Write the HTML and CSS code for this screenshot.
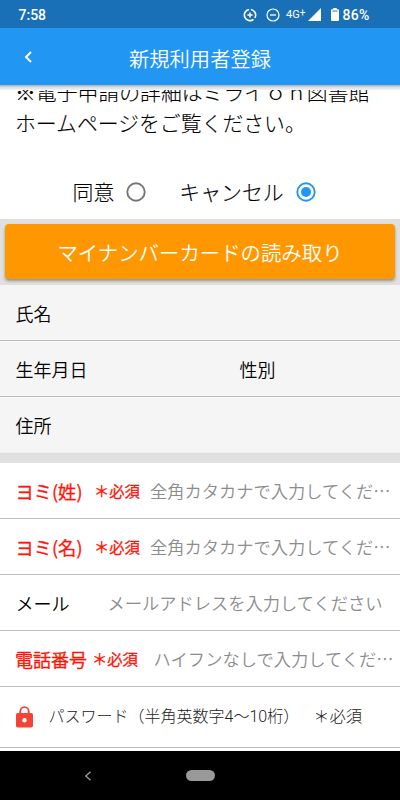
FILE: index.html
```
<!DOCTYPE html>
<html lang="ja">
<head>
<meta charset="utf-8">
<title>新規利用者登録</title>
<link rel="stylesheet" href="styles.css">
</head>
<body>
<div class="screen">
  <header class="status">
    <span class="clock">7:58</span>
    <svg class="saver" width="14" height="14" viewBox="0 0 14 14" fill="none" stroke="#fff"><path d="M7.900 1.500A5.600 5.600 0 0 1 11.900 9.800M10.600 11.300A5.600 5.600 0 1 1 6.100 1.500" stroke-width="1.600"/><path d="M7 4.400v5.200M4.400 7h5.200" stroke-width="1.500"/></svg>
    <svg class="dnd" width="14" height="14" viewBox="0 0 14 14" fill="none" stroke="#fff"><circle cx="7" cy="7" r="6" stroke-width="1.2"/><path d="M4 7h6" stroke-width="1.3"/></svg>
    <span class="net">4G<span class="plus">+</span></span>
    <svg class="signal" width="13" height="13" viewBox="0 0 13 13"><path d="M13 0v13H0z" fill="#fff"/></svg>
    <svg class="battery" width="8" height="13" viewBox="0 0 8 13"><path d="M2.3 0h3.4v1.3H7q1 0 1 1V12q0 1-1 1H1q-1 0-1-1V2.300q0-1 1-1h1.300z" fill="#fff"/><path d="M1.300 2.600h5.400v.9H1.300z" fill="#1a70b7"/></svg>
    <span class="percent">86%</span>
  </header>
  <div class="appbar">
    <svg class="back" width="8" height="12" viewBox="0 0 8 12"><path d="M7 1 2 6l5 5" fill="none" stroke="#fff" stroke-width="1.9"/></svg>
    <h1>新規利用者登録</h1>
  </div>
  <div class="edge"></div>
  <main>
    <section class="notice">
      <p>※電子申請の詳細はミライｏｎ図書館<br>ホームページをご覧ください。</p>
    </section>
    <div class="choices">
      <span>同意</span>
      <svg class="radio" width="20" height="20" viewBox="0 0 20 20"><circle cx="10" cy="10" r="8.700" fill="none" stroke="#757575" stroke-width="1.900"/></svg>
      <span class="cancel">キャンセル</span>
      <svg class="radio selected" width="20" height="20" viewBox="0 0 20 20"><circle cx="10" cy="10" r="8.700" fill="none" stroke="#2196f3" stroke-width="1.900"/><circle cx="10" cy="10" r="5" fill="#2196f3"/></svg>
    </div>
    <div class="action"><button>マイナンバーカードの読み取り</button></div>
    <div class="row info"><span class="label">氏名</span></div>
    <div class="row info split"><span class="label">生年月日</span><span class="label">性別</span></div>
    <div class="row info last"><span class="label">住所</span></div>
    <div class="band"></div>
    <div class="row"><span class="label red">ヨミ(姓)</span><span class="must yomi">＊必須</span><span class="hint">全角カタカナで入力してくだ…</span></div>
    <div class="row"><span class="label red">ヨミ(名)</span><span class="must yomi">＊必須</span><span class="hint">全角カタカナで入力してくだ…</span></div>
    <div class="row"><span class="label mail">メール</span><span class="hint">メールアドレスを入力してください</span></div>
    <div class="row"><span class="label red number">電話番号</span><span class="must tel">＊必須</span><span class="hint">ハイフンなしで入力してくだ…</span></div>
    <div class="row password">
      <svg class="lock" width="17" height="22" viewBox="0 0 17 22"><path d="M4.300 8V5.300a4.200 4.200 0 0 1 8.400 0V8" fill="none" stroke="#f44336" stroke-width="1.900"/><rect y="7" width="17" height="14.500" rx="1.800" fill="#f44336"/><circle cx="8.500" cy="14.200" r="2.200" fill="#fff"/></svg>
      <span class="pass">パスワード（半角英数字4～10桁）</span><span class="pass need">＊必須</span>
    </div>
  </main>
  <nav>
    <svg class="navback" width="8" height="10" viewBox="0 0 8 10"><path d="M6.500.7 1.800 5l4.700 4.300" fill="none" stroke="#999" stroke-width="1.400"/></svg>
    <span class="pill"></span>
  </nav>
</div>
</body>
</html>
```
FILE: styles.css
```
* { box-sizing: border-box; }
body { margin: 0; font-family: "Noto Sans CJK JP", sans-serif; font-weight: 350; color: #000; }
.screen { width: 400px; height: 800px; display: flex; flex-direction: column; overflow: hidden; background: #fff; }
svg { display: block; flex: none; }
span { white-space: nowrap; }

.status { height: 28px; flex: none; background: #1a70b7; color: #fff; display: flex; align-items: center; padding: 1px 0 0 18.500px; font: 500 13.5px/28px Roboto, sans-serif; }
.clock { width: 224.500px; font-size: 14px; }
.dnd { margin-left: 8.500px; }
.net { font-size: 11px; font-weight: 400; margin-left: 6.500px; width: 22px; display: flex; }
.plus { font-size: 10px; margin-top: -2px; }
.battery { margin-left: 10px; }
.percent { margin: 0 0 0 3.500px; font-size: 14px; letter-spacing: .3px; }

.appbar { height: 57px; flex: none; background: #2196f3; color: #fff; display: flex; align-items: center; padding-left: 24px; }
h1 { margin: 2px 0 0 97px; font-size: 20.3px; font-weight: 350; line-height: 30px; }
.edge { height: 5px; flex: none; background: linear-gradient(#a9afb3, #dedede 50%, #f4f4f4); }

main { flex: 1; min-height: 0; overflow: hidden; }
.notice { height: 82px; overflow: hidden; }
.notice p { margin: -14px 0 0 15px; font-size: 20.85px; font-weight: 300; line-height: 30.500px; white-space: nowrap; -webkit-text-stroke: .1px #000; }
.choices { height: 47px; display: flex; align-items: center; padding: 0 0 7px 72.500px; font-size: 20.900px; font-weight: 300; line-height: 30px; -webkit-text-stroke: .1px #000; }
.choices span { margin-top: -2px; }
.choices .radio { margin-left: 12px; }
.choices .cancel { margin-left: 33px; }
.action { height: 66px; background: #e0e0e0; padding: 5px; }
button { display: block; width: 390px; height: 55px; border: 0; border-radius: 4px; background: #ff9800; color: #fff; font: 350 20.4px/30px "Noto Sans CJK JP", sans-serif; padding: 0; box-shadow: 0 2px 3px rgba(0,0,0,.35); }

.row { height: 56px; border-bottom: 1px solid #bdbdbd; display: flex; align-items: center; padding: 1px 0 0 15.500px; }
.row span { flex: none; }
.info { background: #f5f5f5; }
.info .label { width: 224px; }
.last { border-bottom-color: #eee; }
.band { height: 10px; background: #e0e0e0; }
.label { font-size: 18px; line-height: 26px; }
.red, .must { color: #ff1408; -webkit-text-stroke: .4px #ff1408; }
.red { width: 78.500px; font-size: 18.300px; }
.number { margin-left: -.5px; font-size: 18px; }
.must { font-size: 15.300px; line-height: 26px; margin-top: -2px; }
.yomi { width: 56px; }
.tel { width: 61.500px; margin-left: -1.500px; }
.mail { width: 92px; }
.hint { color: #8c8c8c; font-size: 17.250px; line-height: 26px; }
.password { height: 61px; color: #222; padding-top: 0; }
.lock { margin-top: 0; }
.pass { font-family: Roboto, "Noto Sans CJK JP", sans-serif; font-weight: 300; font-size: 16px; line-height: 26px; margin: -1px 0 0 16px; }
.password .need { font-size: 16.300px; margin-left: 14px; }

nav { height: 49px; flex: none; background: #000; display: flex; align-items: center; padding-left: 84px; }
.pill { width: 29px; height: 11px; margin-left: 94px; border-radius: 6px; background: #999; }
```
